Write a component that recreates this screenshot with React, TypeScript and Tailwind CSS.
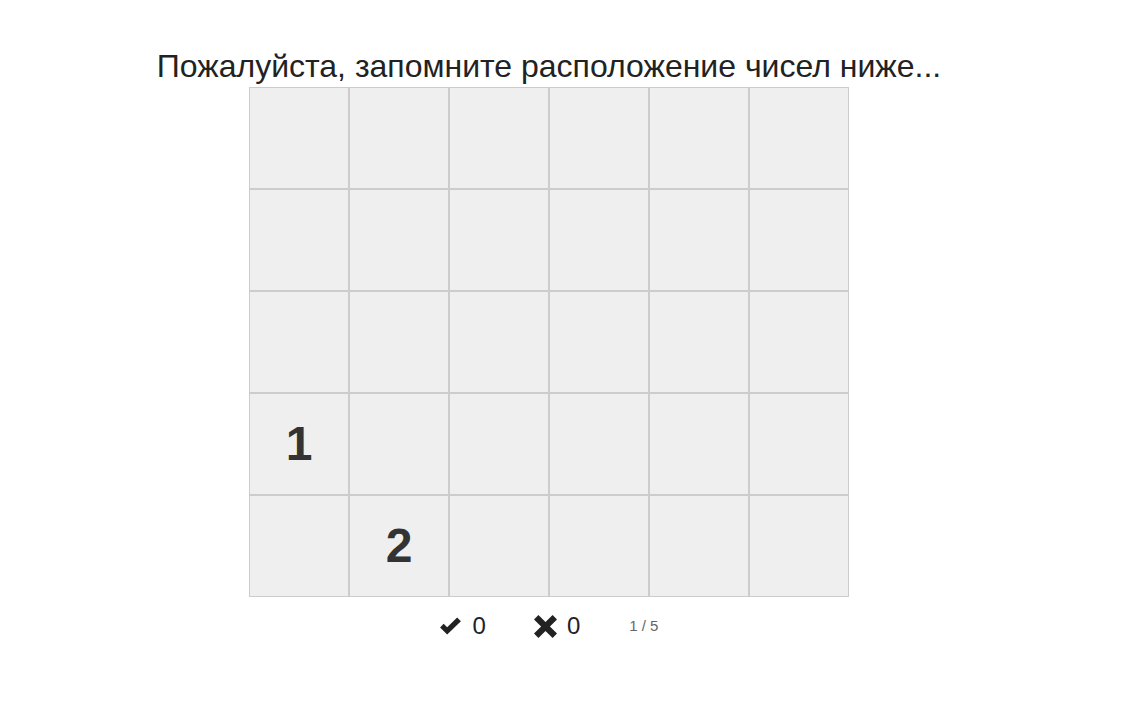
import React from 'react';

const ROWS = 5;
const COLS = 6;

// positions of the numbers to memorise: [row, col, value]
const numbers: [number, number, number][] = [
    [3, 0, 1],
    [4, 1, 2],
];

const CheckIcon: React.FC<{className: string}> = ({ className }) => (
    <svg className={className} viewBox="0 0 22 19" fill="currentColor">
        <path d="M0 11 L3.8 7.2 L7.5 10.8 L18 0.5 L22 4.5 L7.5 18.5 Z" />
    </svg>
);

const CrossIcon: React.FC<{className: string}> = ({ className }) => (
    <svg className={className} viewBox="0 0 22 22" fill="currentColor">
        <path d="M4.2 0 L11 6.8 L17.8 0 L22 4.2 L15.2 11 L22 17.8 L17.8 22 L11 15.2 L4.2 22 L0 17.8 L6.8 11 L0 4.2 Z" />
    </svg>
);

const App: React.FC = () => {
    const valueAt = (r: number, c: number) => {
        const hit = numbers.find(([nr, nc]) => nr === r && nc === c);
        return hit ? hit[2] : null;
    };

    return (
        <div className="min-h-screen bg-white font-['Liberation_Sans',Arial,sans-serif]">
            <div className="ml-[249px] w-[600px] pt-[48px]">
                <h1 className="text-center text-[32px] leading-[36px] text-[#222] whitespace-nowrap -mx-[200px]">
                    Пожалуйста, запомните расположение чисел ниже...
                </h1>
                <div className="mt-[3px] grid grid-cols-6">
                    {Array.from({ length: ROWS * COLS }).map((_, i) => {
                        const r = Math.floor(i / COLS);
                        const c = i % COLS;
                        const v = valueAt(r, c);
                        return (
                            <div
                                key={i}
                                className="h-[102px] border border-[#cccccc] bg-[#efefef] flex items-center justify-center text-[48px] font-bold leading-none text-[#333]"
                            >
                                {v}
                            </div>
                        );
                    })}
                </div>
                <div className="mt-[17px] flex items-center justify-center text-[#222]">
                    <div className="flex items-center">
                        <CheckIcon className="w-[21px] h-[18px]" />
                        <span className="ml-[12px] text-[24px] leading-[24px]">0</span>
                    </div>
                    <div className="ml-[48px] flex items-center">
                        <CrossIcon className="w-[23px] h-[23px]" />
                        <span className="ml-[10px] text-[24px] leading-[24px]">0</span>
                    </div>
                    <span className="ml-[49px] text-[15px] text-[#666]">1 / 5</span>
                </div>
            </div>
        </div>
    );
};

export default App;
